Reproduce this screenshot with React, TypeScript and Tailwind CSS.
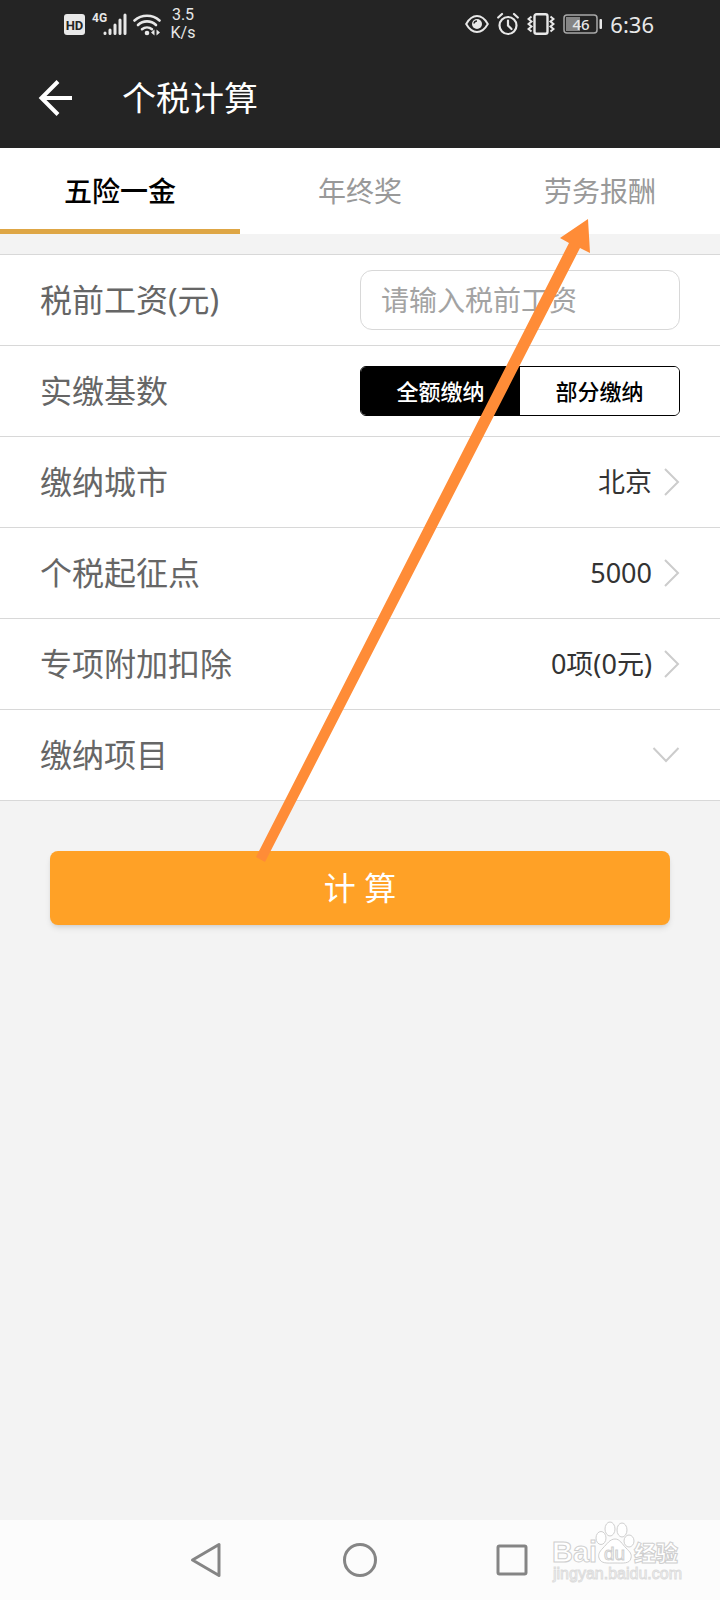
import { useState } from "react";
import type { ReactNode } from "react";

const TABS = ["五险一金", "年终奖", "劳务报酬"];
const BASES = ["全额缴纳", "部分缴纳"];

function StatusBar() {
  return (
    <div className="flex h-12 items-center justify-between pr-[66px] pl-16 text-[#e8e8e8]">
      <div className="flex items-center">
        <svg width="97" height="26" viewBox="0 0 97 26" fill="none" role="img" aria-label="HD 4G">
          <rect x="0" y="3" width="21" height="21" rx="3" fill="#e8e8e8" />
          <text x="10.5" y="18.5" textAnchor="middle" fontSize="13" fontWeight="700" fontFamily="Roboto, sans-serif" fill="#242424">HD</text>
          <text x="28" y="11" fontSize="12" fontWeight="700" fontFamily="Roboto, sans-serif" fill="#e8e8e8">4G</text>
          <path d="M41 22v.5M46 19v3.5M51 14v8.500M56 9v13.500M61 4v18.500" stroke="#e8e8e8" strokeWidth="3" strokeLinecap="round" />
          <g stroke="#e8e8e8" strokeWidth="2.6" strokeLinecap="round">
            <path d="M70.5 9.5a19 19 0 0 1 25 0" />
            <path d="M74 14a13 13 0 0 1 18 0" />
            <path d="M78 18.2a8 8 0 0 1 10 0" />
          </g>
          <circle cx="83" cy="22" r="2.3" fill="#e8e8e8" />
          <path d="M90.5 18.500v6l-3.500-3zM92.500 18.500v6l3.500-3z" fill="#e8e8e8" />
        </svg>
        <div className="ml-2 w-7 text-center font-[Roboto,sans-serif] text-base leading-[18px]">
          <div>3.5</div>
          <div>K/s</div>
        </div>
      </div>
      <div className="flex items-center gap-2">
        <svg width="24" height="20" viewBox="0 0 24 20" fill="none" stroke="#e8e8e8" strokeWidth="2">
          <path d="M1.2 10C4 5 7.5 2 12 2s8 3 10.800 8C20 15 16.500 18 12 18S4 15 1.200 10z" />
          <circle cx="12" cy="10" r="5" fill="#e8e8e8" stroke="none" />
          <path d="M9 9.500A3 3 0 0 1 12 7" stroke="#242424" strokeWidth="1.5" />
        </svg>
        <svg width="22" height="24" viewBox="0 0 22 24" fill="none" stroke="#e8e8e8" strokeWidth="2.2" strokeLinecap="round">
          <circle cx="11" cy="13.5" r="8.5" />
          <path d="M11 8.500v5l3.500 3.500M1.200 5.500L5 2M20.800 5.500L17 2" />
        </svg>
        <svg width="28" height="22" viewBox="0 0 28 22" fill="none" stroke="#e8e8e8" strokeWidth="2.4">
          <rect x="7.5" y="1.2" width="13" height="19.6" rx="2" />
          <path d="M4.500 3.500l-3 2.500 3 2.500-3 2.500 3 2.500-3 2.500 3 2.500M23.500 3.500l3 2.500-3 2.500 3 2.500-3 2.500 3 2.500-3 2.500" strokeWidth="2" />
        </svg>
        <svg width="39" height="20" viewBox="0 0 39 20" fill="none" role="img" aria-label="46">
          <rect x="1" y="1" width="33" height="18" rx="3" stroke="#a8a8a8" strokeWidth="1.5" />
          <rect x="3" y="3" width="14" height="14" fill="#858585" />
          <rect x="36.5" y="5" width="2.500" height="10" rx="1" fill="#e8e8e8" />
          <text x="18" y="15.500" textAnchor="middle" fontSize="15" fontWeight="500" fontFamily="Noto Sans, sans-serif" fill="#e8e8e8">46</text>
        </svg>
        <span className="text-[22px] leading-6">6:36</span>
      </div>
    </div>
  );
}

function Chevron({ down = false }: { down?: boolean }) {
  return down ? (
    <svg width="28" height="28" viewBox="0 0 28 28" fill="none" stroke="#cccccc" strokeWidth="2">
      <path d="M1.5 7l12.500 13L26.500 7" />
    </svg>
  ) : (
    <svg width="16" height="28" viewBox="0 0 16 28" fill="none" stroke="#cccccc" strokeWidth="2">
      <path d="M1 1l13 13L1 27" />
    </svg>
  );
}

function Row({ children }: { children: ReactNode }) {
  return (
    <div className="flex h-[91px] items-center justify-between border-b border-[#d8d8d8] px-10 text-[32px] text-[#666666]">
      {children}
    </div>
  );
}

function LinkRow({ label, value }: { label: string; value?: string }) {
  return (
    <button type="button" className="flex h-[91px] w-full items-center justify-between border-b border-[#d8d8d8] px-10 text-left">
      <span className="text-[32px] text-[#666666]">{label}</span>
      <span className="flex items-center gap-3 text-[27px] text-[#333333]">
        {value}
        <Chevron down={!value} />
      </span>
    </button>
  );
}

function Watermark() {
  return (
    <svg className="absolute top-0 right-9" width="134" height="70" viewBox="550 1520 134 70" fill="#ffffff" stroke="#cfcfcf" strokeWidth="1">
      <text x="552" y="1562" fontSize="29" fontWeight="700" fontFamily="Liberation Sans, sans-serif">Bai</text>
      <path d="M615 1539c-5 0-8 5-12 9s-5 7-4 10c2 6 8 5 16 5s15 1 16-5c1-4-1-6-5-10s-6-9-11-9z" />
      <ellipse cx="601" cy="1538" rx="5" ry="6.5" />
      <ellipse cx="610" cy="1529" rx="5" ry="7" />
      <ellipse cx="622" cy="1530" rx="5" ry="7" />
      <ellipse cx="629" cy="1541" rx="5" ry="6" />
      <text x="604" y="1560" fontSize="19" fontWeight="400" fontFamily="Liberation Sans, sans-serif">du</text>
      <text x="634" y="1561" fontSize="22" fontWeight="900" fontFamily="Noto Sans CJK SC, sans-serif">经验</text>
      <text x="553" y="1579" fontSize="16" stroke="#dcdcdc" fontFamily="Liberation Sans, sans-serif">jingyan.baidu.com</text>
    </svg>
  );
}

export default function App() {
  const [tab, setTab] = useState(0);
  const [base, setBase] = useState(0);
  const [salary, setSalary] = useState("");

  return (
    <div className="relative flex min-h-screen flex-col bg-[#f3f3f3] font-['Noto_Sans','Noto_Sans_CJK_SC',sans-serif]">
      <header className="bg-[#242424]">
        <StatusBar />
        <div className="flex h-[100px] items-center gap-12 pl-[38px] text-white">
          <button type="button" aria-label="返回">
            <svg width="36" height="36" viewBox="0 0 36 36" fill="none" stroke="currentColor" strokeWidth="4">
              <path d="M34 18H4M20 1.5L3.5 18 20 34.5" />
            </svg>
          </button>
          <h1 className="text-[34px]">个税计算</h1>
        </div>
      </header>

      <div role="tablist" className="grid grid-cols-3 bg-white">
        {TABS.map((name, i) => (
          <button
            key={name}
            type="button"
            role="tab"
            aria-selected={tab === i}
            onClick={() => setTab(i)}
            className={`h-[86px] border-b-[5px] pt-1 text-[28px] ${tab === i ? "border-[#dea645] font-medium text-black" : "border-transparent text-[#999999]"}`}
          >
            {name}
          </button>
        ))}
      </div>

      <main className="flex-1 pt-5">
        <div className="border-t border-[#d8d8d8] bg-white">
          <Row>
            <label htmlFor="salary">税前工资(元)</label>
            <input
              id="salary"
              value={salary}
              onChange={(e) => setSalary(e.target.value)}
              placeholder="请输入税前工资"
              className="h-[60px] w-80 rounded-xl border border-[#d8d8d8] px-5 text-[28px] text-[#333333] placeholder:text-[#a3a3a3]"
            />
          </Row>
          <Row>
            <span id="base">实缴基数</span>
            <div role="radiogroup" aria-labelledby="base" className="grid h-[50px] w-80 grid-cols-2 overflow-hidden rounded-md border border-black text-[22px] font-medium">
              {BASES.map((name, i) => (
                <label
                  key={name}
                  className={`flex items-center justify-center ${base === i ? "bg-black text-white" : "bg-white text-black"}`}
                >
                  <input type="radio" name="base" checked={base === i} onChange={() => setBase(i)} className="sr-only" />
                  {name}
                </label>
              ))}
            </div>
          </Row>
          <LinkRow label="缴纳城市" value="北京" />
          <LinkRow label="个税起征点" value="5000" />
          <LinkRow label="专项附加扣除" value="0项(0元)" />
          <LinkRow label="缴纳项目" />
        </div>
        <div className="px-[50px] pt-[50px]">
          <button type="button" className="h-[74px] w-full rounded-lg bg-[#ffa126] text-[32px] text-white shadow-md">
            计 算
          </button>
        </div>
      </main>

      <nav className="relative flex h-20 items-center justify-center gap-[117px] bg-[#fcfcfc]">
        <button type="button" aria-label="返回键">
          <svg width="36" height="36" viewBox="0 0 36 36" fill="none" stroke="#858585" strokeWidth="3" strokeLinejoin="round">
            <path d="M30 2.5v31L3.5 18z" />
          </svg>
        </button>
        <button type="button" aria-label="主屏幕">
          <svg width="36" height="36" viewBox="0 0 36 36" fill="none" stroke="#858585" strokeWidth="3">
            <circle cx="18" cy="18" r="15.5" />
          </svg>
        </button>
        <button type="button" aria-label="最近任务">
          <svg width="36" height="36" viewBox="0 0 36 36" fill="none" stroke="#858585" strokeWidth="3">
            <rect x="3" y="4" width="28" height="28" rx="1.5" />
          </svg>
        </button>
        <Watermark />
      </nav>

      {/* pointer from the submit button up to the third tab */}
      <svg className="pointer-events-none absolute top-[210px] left-[250px]" width="350" height="660" viewBox="250 210 350 660" fill="#ff8c37">
        <path d="M588 219l2 34-10-5-315 614-9-5 313-614-9-5z" />
      </svg>
    </div>
  );
}
